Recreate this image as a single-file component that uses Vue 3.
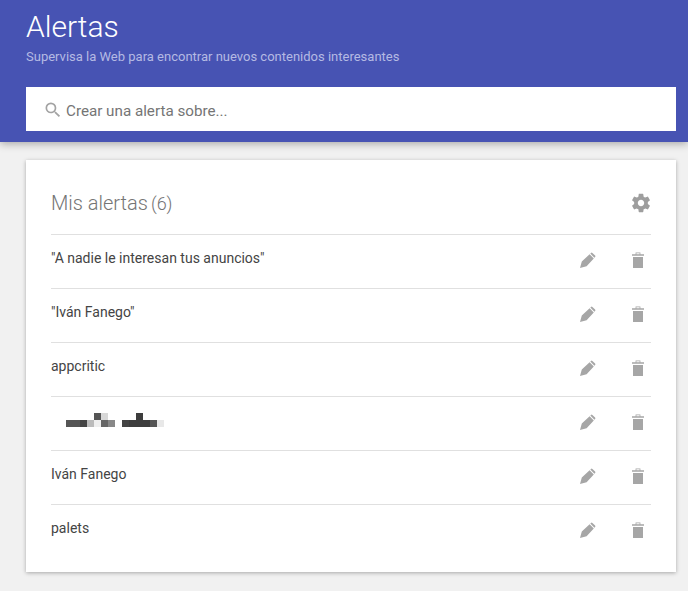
<script setup>
const alerts = [
  { name: '"A nadie le interesan tus anuncios"' },
  { name: '"Iván Fanego"' },
  { name: 'appcritic' },
  { name: '', blurred: true },
  { name: 'Iván Fanego' },
  { name: 'palets' }
]
const top = ['', '', '', '', '#555', '#d8d8d8', '', '', '', '', '#3d3d3d', '', '', '']
const bottom = ['#555', '#555', '#444', '#bbb', '#eee', '#666', '#888', '', '#444', '#3d3d3d', '#3d3d3d', '#3d3d3d', '#555', '#e8e8e8']
const pixels = [...top, ...bottom]
</script>

<template>
  <div class="page">
    <header class="hero">
      <h1 class="title">Alertas</h1>
      <p class="subtitle">Supervisa la Web para encontrar nuevos contenidos interesantes</p>
      <div class="search">
        <svg class="search-icon" viewBox="0 0 24 24" width="20" height="20">
          <path fill="#a3a3a3" d="M15.5 14h-.79l-.28-.27A6.47 6.47 0 0 0 16 9.5 6.5 6.5 0 1 0 9.5 16c1.61 0 3.09-.59 4.23-1.57l.27.28v.79l5 4.99L20.49 19l-4.99-5zm-6 0C7.01 14 5 11.99 5 9.5S7.01 5 9.5 5 14 7.01 14 9.5 11.99 14 9.5 14z"/>
        </svg>
        <span class="search-text">Crear una alerta sobre...</span>
      </div>
    </header>

    <main class="card">
      <div class="card-head">
        <h2 class="card-title">Mis alertas<span class="count">(6)</span></h2>
        <svg class="gear" viewBox="0 0 24 24" width="22" height="22">
          <path fill="#9e9e9e" d="M19.43 12.98c.04-.32.07-.64.07-.98s-.03-.66-.07-.98l2.11-1.65c.19-.15.24-.42.12-.64l-2-3.46c-.12-.22-.39-.3-.61-.22l-2.49 1c-.52-.4-1.08-.73-1.69-.98l-.38-2.65A.488.488 0 0 0 14 2h-4c-.25 0-.46.18-.49.42l-.38 2.65c-.61.25-1.17.59-1.69.98l-2.49-1c-.23-.09-.49 0-.61.22l-2 3.46c-.13.22-.07.49.12.64l2.11 1.65c-.04.32-.07.65-.07.98s.03.66.07.98l-2.11 1.65c-.19.15-.24.42-.12.64l2 3.46c.12.22.39.3.61.22l2.49-1c.52.4 1.08.73 1.69.98l.38 2.65c.03.24.24.42.49.42h4c.25 0 .46-.18.49-.42l.38-2.65c.61-.25 1.17-.59 1.69-.98l2.49 1c.23.09.49 0 .61-.22l2-3.46c.12-.22.07-.49-.12-.64l-2.11-1.65zM12 15.5c-1.93 0-3.5-1.57-3.5-3.5s1.57-3.5 3.5-3.5 3.5 1.57 3.5 3.5-1.57 3.5-3.5 3.5z"/>
        </svg>
      </div>
      <ul class="list">
        <li v-for="(alert, i) in alerts" :key="i" class="row">
          <div v-if="alert.blurred" class="blur">
            <i v-for="(color, p) in pixels" :key="p" :style="{ background: color || 'transparent' }"></i>
          </div>
          <span v-else class="name">{{ alert.name }}</span>
          <svg class="edit" viewBox="0 0 16 16" width="16" height="16">
            <path fill="#a6a6a6" d="M0 16L1.8 9.4 9.6 2.2 13.8 6.4 6.6 14.2zM10.3 1.6l.7-.7a1 1 0 0 1 1.4 0l2.7 2.7a1 1 0 0 1 0 1.4l-.7.7z"/>
          </svg>
          <svg class="trash" viewBox="0 0 12 16" width="12" height="16">
            <path fill="#a6a6a6" d="M1 5h10v11H1zM0 2.3h3.6V.6h4.8v1.7H12v1.4H0zM4.4 1.3v1h3.2v-1z"/>
          </svg>
        </li>
      </ul>
    </main>
  </div>
</template>

<style scoped>
.page {
  width: 688px;
  height: 591px;
  overflow: hidden;
  background: #f1f1f1;
  font-family: Roboto, "Liberation Sans", sans-serif;
}
.hero {
  height: 142px;
  box-sizing: border-box;
  padding: 9px 12px 0 26px;
  background: #4753b3;
  box-shadow: 0 2px 8px rgba(0, 0, 0, 0.3);
}
.title {
  margin: 0;
  font-size: 30px;
  line-height: 36px;
  font-weight: 300;
  color: #fff;
}
.subtitle {
  margin: 3px 0 0;
  font-size: 13px;
  line-height: 18px;
  color: #b5bae3;
}
.search {
  margin-top: 21px;
  height: 44px;
  display: flex;
  align-items: center;
  gap: 3px;
  padding-left: 17px;
  background: #fff;
}
.search-icon {
  margin-top: 2px;
}
.search-text {
  font-size: 15.2px;
  color: #757575;
  padding-top: 4px;
  line-height: 20px;
}
.card {
  margin: 18px 12px 0 26px;
  height: 412px;
  box-sizing: border-box;
  padding: 0 25px;
  background: #fff;
  box-shadow: 0 1px 4px rgba(0, 0, 0, 0.3);
}
.card-head {
  height: 74px;
  display: flex;
  align-items: center;
  justify-content: space-between;
  padding: 12px 0 0;
  box-sizing: border-box;
}
.card-title {
  margin: 0;
  font-size: 20px;
  font-weight: 300;
  color: #757575;
}
.count {
  margin-left: 3px;
  font-size: 18px;
}
.gear {
  margin-right: -1px;
}
.list {
  margin: 0;
  padding: 0;
  list-style: none;
}
.row {
  height: 54px;
  box-sizing: border-box;
  border-top: 1px solid #e0e0e0;
  display: flex;
  align-items: center;
  padding-bottom: 8px;
}
.name {
  flex: 1;
  font-size: 14px;
  color: #444;
}
.blur {
  flex: 1;
  margin-left: 15px;
  display: grid;
  grid-template-columns: repeat(14, 7px);
  grid-auto-rows: 7px;
}
.edit {
  margin-right: 36px;
  margin-top: 5px;
}
.trash {
  margin-right: 7px;
  margin-top: 5px;
}
</style>
